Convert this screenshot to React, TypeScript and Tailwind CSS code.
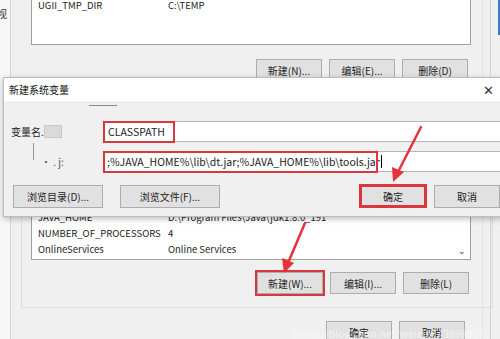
const font = { fontFamily: '"Noto Sans CJK SC", "Noto Sans", sans-serif' }

function Btn({ label, className = "" }: { label: string; className?: string }) {
  return (
    <div className={"flex h-[22px] w-[66px] items-center justify-center border border-[#adadad] bg-[#e1e1e1] text-[10px] text-[#222] " + className}>
      {label}
    </div>
  )
}

function Arrows() {
  return (
    <svg className="pointer-events-none absolute left-0 top-0" width="500" height="339">
      <g stroke="#e8323a" strokeWidth="2.5" strokeLinecap="round">
        <line x1="421" y1="127" x2="398" y2="172" />
        <line x1="305" y1="223" x2="288" y2="263" />
      </g>
      <polygon points="393,182 392,167 404,172" fill="#e8323a" />
      <polygon points="284,273 282,258 294,263" fill="#e8323a" />
    </svg>
  )
}

export default function App() {
  return (
    <div className="relative h-[339px] w-[500px] overflow-hidden bg-[#f0f0f0]" style={font}>
      {/* window behind */}
      <div className="flex h-full">
        <div className="w-[11px] shrink-0 border-r border-[#d4d4d4] bg-[#f7f7f7] text-[10px] leading-none text-[#333]">
          <div className="-ml-[3px] mt-[9px]">视</div>
        </div>
        <div className="relative flex-1">
          <div className="ml-[20px] mr-[17px] -mt-[10px] flex flex-col">
            <div className="w-[440px] border border-[#a0a0a0] bg-white">
              <div className="flex h-[21px] items-end pl-[6px] text-[9.5px] text-[#222]">
                <span className="w-[130px]">UGII_TMP_DIR</span>
                <span>C:\TEMP</span>
              </div>
              <div className="h-[32px]"></div>
            </div>
            <div className="mt-[14px] flex gap-[7px] pl-[225px]">
              <Btn label="新建(N)..." />
              <Btn label="编辑(E)..." />
              <Btn label="删除(D)" />
            </div>
          </div>
          <div className="ml-[10px] mr-[7px] mt-[38px] h-[189px] border border-t-0 border-[#dcdcdc] px-[9px]">
            <div className="w-[440px] border border-[#a0a0a0] bg-white text-[9.5px] text-[#222]">
              <div className="h-[89px]"></div>
              <div className="flex h-[16px] items-center pl-[6px]">
                <span className="w-[130px]">JAVA_HOME</span>
                <span>D:\Program Files\Java\jdk1.8.0_191</span>
              </div>
              <div className="flex h-[16px] items-center pl-[6px]">
                <span className="w-[130px]">NUMBER_OF_PROCESSORS</span>
                <span>4</span>
              </div>
              <div className="relative flex h-[16px] items-center pl-[6px]">
                <span className="w-[130px]">OnlineServices</span>
                <span>Online Services</span>
                <span className="absolute right-[4px] top-[3px] text-[9px] text-[#444]">⌄</span>
              </div>
              <div className="h-[2px]"></div>
            </div>
            <div className="mt-[12px] flex gap-[7px] pl-[226px]">
              <Btn label="新建(W)..." className="outline-2 outline-[#d9363e]" />
              <Btn label="编辑(I)..." />
              <Btn label="删除(L)" />
            </div>
          </div>
          <div className="mt-[13px] flex gap-[7px] pl-[315px]">
            <Btn label="确定" />
            <Btn label="取消" />
          </div>
          <div className="absolute right-[17px] top-0 h-full border-l border-[#e2e2e2]"></div>
          <div className="absolute right-[9px] top-0 h-full border-l border-[#d4d4d4]"></div>
          <div className="absolute right-0 top-0 h-[35px] w-[2px] bg-[#3d7bd0]"></div>
        </div>
      </div>

      {/* dialog */}
      <div className="absolute left-[3px] top-[77px] w-[500px] border border-[#bdbdbd] shadow-[0_2px_6px_rgba(0,0,0,0.25)]">
        <div className="flex h-[23px] items-center justify-between bg-white pl-[5px] pr-[8px] text-[10px] text-[#111]">
          <span>新建系统变量</span>
          <span className="text-[13px] font-light leading-none text-[#333]">✕</span>
        </div>
        <div className="relative h-[115px] bg-[#f0f0f0] text-[10px] text-[#222]">
          <div className="absolute left-[85px] top-[4px] h-px w-[28px] bg-[#8a8a8a]"></div>
          <div className="flex pt-[20px]">
            <div className="flex w-[99px] items-center pl-[7px]">
              <span>变量名..</span>
              <span className="-ml-[3px] h-[13px] w-[18px] border border-[#c8c8c8] bg-[#dadada]"></span>
            </div>
            <div className="relative flex h-[21px] flex-1 items-center border border-[#b5b5b5] bg-white pl-[4px] text-[10.5px]">
              CLASSPATH
              <div className="absolute -left-px -top-px h-[22px] w-[72px] border-2 border-[#d9363e]"></div>
            </div>
          </div>
          <div className="mt-[9px] flex">
            <div className="relative flex w-[99px] items-center pl-[37px] text-[#555]">
              <span className="absolute left-[29px] -top-[8px] h-[17px] w-px bg-[#999]"></span>
              <span>· . j:</span>
            </div>
            <div className="relative flex h-[21px] flex-1 items-center border border-[#b5b5b5] bg-white pl-[3px] text-[10.5px]">
              ;%JAVA_HOME%\lib\dt.jar;%JAVA_HOME%\lib\tools.jar
              <span className="ml-px h-[13px] w-px bg-black"></span>
              <div className="absolute -left-px -top-px h-[22px] w-[275px] border-2 border-[#d9363e]"></div>
            </div>
          </div>
          <div className="mt-[12px] flex items-center pl-[9px]">
            <div className="flex h-[23px] w-[90px] items-center justify-center border border-[#adadad] bg-[#e1e1e1]">浏览目录(D)...</div>
            <div className="ml-[17px] flex h-[23px] w-[100px] items-center justify-center border border-[#adadad] bg-[#e1e1e1]">浏览文件(F)...</div>
            <div className="ml-[139px] flex h-[24px] w-[68px] items-center justify-center border-[3px] border-[#d9363e] bg-[#e1e1e1]">确定</div>
            <div className="ml-[7px] flex h-[23px] w-[66px] items-center justify-center border border-[#adadad] bg-[#e1e1e1]">取消</div>
          </div>
        </div>
      </div>

      <Arrows />
      <div className="pointer-events-none absolute left-[292px] top-[328px] text-[10px] leading-[11px] tracking-wide text-white/60">https://blog.csdn.net/weixin_43898007</div>
    </div>
  )
}
